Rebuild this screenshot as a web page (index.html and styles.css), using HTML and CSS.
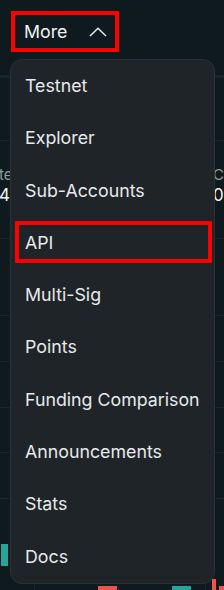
FILE: index.html
```html
<!DOCTYPE html>
<html lang="en">
<head>
  <meta charset="UTF-8" />
  <title>More menu</title>
  <meta name="viewport" content="width=device-width, initial-scale=1" />
  <link rel="stylesheet" href="styles.css">
</head>
<body>
  <div id="pagina">
    <header class="topo">
      <button class="btn-more">
        <span>More</span>
        <svg width="18" height="10" viewBox="0 0 18 10">
          <polyline points="1,9 9,1.2 17,9" fill="none" stroke="#e8eaeb" stroke-width="1.5" />
        </svg>
      </button>
    </header>
    <div class="faixa"></div>

    <div class="linha l1"></div>
    <div class="linha l2 tabela">
      <div class="col-esq">
        <span class="rotulo">te</span>
        <span class="valor">4</span>
      </div>
      <div class="col-dir">
        <span class="rotulo">C</span>
        <span class="valor">0</span>
      </div>
    </div>
    <div class="linha l3"></div>
    <div class="linha l4"></div>
    <div class="linha l4"></div>
    <div class="linha l5"></div>
    <div class="linha l4"></div>

    <div class="grafico">
      <div class="vert v1"></div>
      <div class="vert v2"></div>
      <div class="vert v3"></div>
      <div class="vela verde c1"></div>
      <div class="vela vermelha c2"></div>
      <div class="vela verde c3"></div>
      <div class="vela vermelha c4"></div>
      <div class="vela vermelha c5"></div>
    </div>

    <nav class="menu">
      <a class="item">Testnet</a>
      <a class="item">Explorer</a>
      <a class="item">Sub-Accounts</a>
      <a class="item marcado">API</a>
      <a class="item">Multi-Sig</a>
      <a class="item">Points</a>
      <a class="item">Funding Comparison</a>
      <a class="item">Announcements</a>
      <a class="item">Stats</a>
      <a class="item">Docs</a>
    </nav>
  </div>
</body>
</html>
```

FILE: styles.css
```css
html, body {
  margin: 0; padding: 0;
  background: #0f1a1f;
  width: 224px;
  height: 590px;
  overflow: hidden;
  font-family: Inter, 'Noto Sans', sans-serif;
  color: #e8eaeb;
}
#pagina {
  position: relative;
  width: 224px;
  height: 590px;
  overflow: hidden;
}
.topo {
  height: 75px;
  box-sizing: border-box;
  padding: 11px 0 0 11px;
}
.btn-more {
  display: flex;
  align-items: center;
  gap: 21px;
  width: 108px;
  height: 41px;
  box-sizing: border-box;
  padding: 0 0 0 9px;
  margin: 0;
  border: 4px solid #ff0000;
  background: transparent;
  color: #f0f2f2;
  font-family: inherit;
  font-size: 17.8px;
  line-height: 24px;
}
.btn-more svg { display: block; }
.faixa {
  height: 3px;
  background: #1a252a;
}
.linha { border-bottom: 1px solid #1b252a; }
.l1 { height: 62px; }
.l2 { height: 97px; }
.l3 { height: 76px; }
.l4 { height: 45px; }
.l5 { height: 44px; }
.tabela {
  display: flex;
  justify-content: space-between;
  font-size: 15px;
}
.col-esq, .col-dir {
  display: flex;
  flex-direction: column;
  padding-top: 24px;
  line-height: 20px;
}
.col-esq { margin-left: -1px; }
.rotulo { color: #8f9a9f; }
.valor { color: #f2f4f4; font-size: 17px; }

/* candles do grafico, posicionados no canvas */
.grafico {
  position: relative;
  height: 100px;
}
.vert {
  position: absolute;
  top: 86px;
  width: 1px;
  height: 20px;
  background: #1b252a;
}
.v1 { left: 34px; }
.v2 { left: 118px; }
.v3 { left: 205px; }
.vela { position: absolute; width: 7px; }
.verde { background: #26a69a; }
.vermelha { background: #ef5350; }
.c1 { left: 1px; top: 45px; height: 22px; }
.c2 { left: 98px; top: 87px; height: 6px; width: 19px; }
.c3 { left: 172px; top: 87px; height: 6px; width: 19px; }
.c4 { left: 212px; top: 80px; height: 12px; width: 4px; }
.c5 { left: 219px; top: 87px; height: 6px; }

.menu {
  position: absolute;
  left: 10px;
  top: 59px;
  width: 205px;
  box-sizing: border-box;
  background: #1f2428;
  border: 1px solid #2b3136;
  border-radius: 12px;
  display: flex;
  flex-direction: column;
}
.item {
  position: relative;
  display: block;
  padding: 14px 14px;
  font-size: 17.8px;
  line-height: 24.3px;
  color: #e8eaeb;
  white-space: nowrap;
}
.marcado::after {
  content: "";
  position: absolute;
  left: 4px;
  right: 2px;
  top: 4px;
  bottom: 6px;
  border: 4px solid #ff0000;
  border-radius: 1px;
}
```
